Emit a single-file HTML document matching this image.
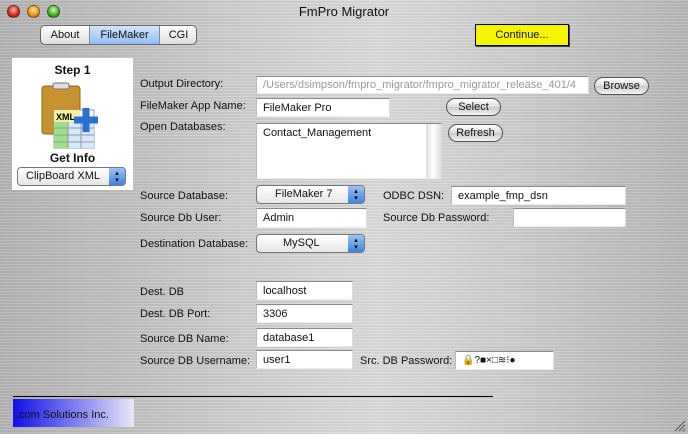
<!DOCTYPE html>
<html><head><meta charset="utf-8"><style>
*{box-sizing:border-box;margin:0;padding:0}
body{width:688px;height:434px;overflow:hidden;font-family:"Liberation Sans",sans-serif;font-size:11px;color:#111;
background:linear-gradient(90deg,#b4b4b4 0%,#cfcfcf 35%,#dcdcdc 55%,#cacaca 80%,#b8b8b8 100%);position:relative;border-radius:6px 6px 0 0}
body:before{content:"";position:absolute;inset:0;background:repeating-linear-gradient(180deg,rgba(255,255,255,.12) 0 1px,rgba(0,0,0,.04) 1px 3px);}
.a{position:absolute}
.lbl{position:absolute;font-size:11px;white-space:nowrap}
.fld{position:absolute;background:#fff;border-top:1px solid #8a8a8a;border-left:1px solid #bbb;border-right:1px solid #ddd;border-bottom:1px solid #eee;padding:0 6px;font-size:11px;white-space:nowrap;overflow:hidden;display:flex;align-items:center}
.btn{position:absolute;border:1px solid #555;border-radius:9px;background:linear-gradient(#fff,#ddd 50%,#c8c8c8 51%,#f4f4f4);text-align:center;font-size:11px;line-height:17px}
.pop{position:absolute;border:1px solid #777;border-radius:4px;background:linear-gradient(#fff,#e6e6e6);font-size:11px;line-height:16px;padding-left:18px}
.pop:after{content:"▴\A▾";white-space:pre;position:absolute;right:0;top:0;bottom:0;width:16px;background:linear-gradient(#9cc4f4,#3d85dd);border-radius:0 3px 3px 0;color:#000;font-size:7px;line-height:7px;text-align:center;padding-top:2px}
.tl{position:absolute;width:13px;height:13px;border-radius:50%;top:5px;border:1px solid rgba(0,0,0,.4)}
</style></head><body>
<div class="tl" style="left:7px;background:radial-gradient(circle at 50% 35%,#ffb0a8,#d2281c 60%,#8a0f08)"></div>
<div class="tl" style="left:27px;background:radial-gradient(circle at 50% 35%,#ffe0a0,#e69410 60%,#8a5005)"></div>
<div class="tl" style="left:47px;background:radial-gradient(circle at 50% 35%,#d0ffb0,#40a828 60%,#1f6010)"></div>
<div class="lbl" style="left:0;width:688px;text-align:center;top:4px;font-size:13px">FmPro Migrator</div>
<div class="a" style="left:40px;top:25px;width:157px;height:20px;border:1px solid #666;border-radius:5px;background:linear-gradient(#fff,#ddd);overflow:hidden">
<div class="a" style="left:0;top:0;width:48px;height:18px;text-align:center;line-height:18px">About</div>
<div class="a" style="left:48px;top:0;width:71px;height:18px;text-align:center;line-height:18px;background:linear-gradient(#d4e6fb,#8fbdf0);border-left:1px solid #888;border-right:1px solid #888">FileMaker</div>
<div class="a" style="left:119px;top:0;width:37px;height:18px;text-align:center;line-height:18px">CGI</div></div>
<div class="a" style="left:475px;top:24px;width:94px;height:22px;background:#f5f500;border:1px solid #000;box-shadow:1px 1px 0 #444;text-align:center;line-height:20px;font-size:11px">Continue...</div>
<div class="a" style="left:12px;top:58px;width:121px;height:132px;background:#fff"></div>
<div class="lbl" style="left:12px;width:121px;text-align:center;top:63px;font-weight:bold;font-size:12px">Step 1</div>
<svg class="a" style="left:40px;top:82px" width="64" height="68">
<rect x="2" y="4" width="38" height="48" rx="3" fill="#c8922e" stroke="#8a6418"/>
<rect x="13" y="1" width="16" height="6" rx="2" fill="#ddd" stroke="#777"/>
<rect x="14" y="28" width="40" height="38" fill="#fff" stroke="#999"/>
<rect x="14" y="40" width="14" height="26" fill="#9be08a"/>
<rect x="28" y="40" width="26" height="26" fill="#d4e8ff"/>
<path d="M14 46H54M14 53H54M14 60H54M28 40V66M41 40V66" stroke="#999" stroke-width="1"/>
<rect x="14" y="28" width="26" height="12" fill="#f4f0a0"/>
<text x="16" y="38" font-size="9" font-weight="bold" font-family="Liberation Sans">XML</text>
<path d="M46 26V50M34 38H58" stroke="#2a6fd0" stroke-width="7"/>
</svg>
<div class="lbl" style="left:12px;width:121px;text-align:center;top:151px;font-weight:bold;font-size:12px">Get Info</div>
<div class="pop" style="left:17px;top:167px;width:109px;height:19px;padding-left:8px;line-height:17px">ClipBoard XML</div>
<div class="lbl" style="left:140px;top:78px">Output Directory:</div>
<div class="fld" style="left:256px;top:76px;width:333px;height:18px;color:#999">/Users/dsimpson/fmpro_migrator/fmpro_migrator_release_401/4</div>
<div class="btn" style="left:594px;top:77px;width:55px;height:18px">Browse</div>
<div class="lbl" style="left:140px;top:100px">FileMaker App Name:</div>
<div class="fld" style="left:256px;top:98px;width:134px;height:19px">FileMaker Pro</div>
<div class="btn" style="left:446px;top:98px;width:55px;height:18px">Select</div>
<div class="lbl" style="left:140px;top:121px">Open Databases:</div>
<div class="fld" style="left:256px;top:123px;width:186px;height:56px;align-items:flex-start;padding-top:3px">Contact_Management</div>
<div class="a" style="left:426px;top:124px;width:15px;height:54px;background:linear-gradient(90deg,#ddd,#fff,#ddd)"></div>
<div class="btn" style="left:448px;top:124px;width:55px;height:18px">Refresh</div>
<div class="lbl" style="left:140px;top:190px">Source Database:</div>
<div class="pop" style="left:256px;top:185px;width:109px;height:19px">FileMaker 7</div>
<div class="lbl" style="left:383px;top:190px">ODBC DSN:</div>
<div class="fld" style="left:451px;top:186px;width:175px;height:19px">example_fmp_dsn</div>
<div class="lbl" style="left:140px;top:212px">Source Db User:</div>
<div class="fld" style="left:256px;top:208px;width:111px;height:20px">Admin</div>
<div class="lbl" style="left:383px;top:212px">Source Db Password:</div>
<div class="fld" style="left:513px;top:208px;width:113px;height:19px"></div>
<div class="lbl" style="left:140px;top:238px">Destination Database:</div>
<div class="pop" style="left:256px;top:234px;width:109px;height:19px;padding-left:26px">MySQL</div>
<div class="lbl" style="left:140px;top:286px">Dest. DB</div>
<div class="fld" style="left:256px;top:281px;width:97px;height:19px">localhost</div>
<div class="lbl" style="left:140px;top:308px">Dest. DB Port:</div>
<div class="fld" style="left:256px;top:304px;width:97px;height:19px">3306</div>
<div class="lbl" style="left:140px;top:333px">Source DB Name:</div>
<div class="fld" style="left:256px;top:328px;width:97px;height:19px">database1</div>
<div class="lbl" style="left:140px;top:355px">Source DB Username:</div>
<div class="fld" style="left:256px;top:350px;width:97px;height:19px">user1</div>
<div class="lbl" style="left:360px;top:355px">Src. DB Password:</div>
<div class="fld" style="left:455px;top:351px;width:99px;height:19px;font-size:10px">🔒?■×□≋⁝●</div>
<div class="a" style="left:13px;top:396px;width:480px;height:1px;background:#000"></div>
<div class="a" style="left:13px;top:399px;width:121px;height:28px;background:linear-gradient(90deg,#1010e8,#e8e8f8)"></div>
<div class="lbl" style="left:16px;top:409px;font-size:11px">.com Solutions Inc.</div>
<svg class="a" style="left:672px;top:418px" width="14" height="14"><path d="M3 13L13 3M7 13L13 7M11 13L13 11" stroke="#555"/></svg>
</body></html>
